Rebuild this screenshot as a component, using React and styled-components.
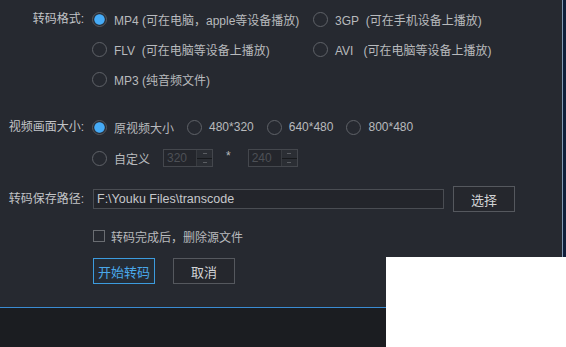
import React from "react";
import styled, { createGlobalStyle } from "styled-components";

const Global = createGlobalStyle`
  html, body { margin: 0; padding: 0; background: #262930; }
  body { width: 566px; height: 347px; overflow: hidden; }
  * { box-sizing: border-box; }
`;

const Frame = styled.div`
  position: relative;
  width: 566px;
  height: 347px;
  display: flex;
  background: #0f1f3a;
  font-family: "Liberation Sans", "Noto Sans CJK SC", sans-serif;
  font-size: 12px;
  color: #b8babd;
  overflow: hidden;
`;

const Window = styled.div`
  width: 563px;
  height: 100%;
  display: flex;
  flex-direction: column;
  border-right: 1px solid #8399b3;
`;

const Main = styled.div`
  flex: 0 0 308px;
  background: #262930;
  border-bottom: 1px solid #3a8bd2;
  padding-top: 4px;
  display: flex;
  flex-direction: column;
`;

const Footer = styled.div`
  flex: 1;
  background: #1b1d21;
`;

const Row = styled.div`
  display: grid;
  grid-template-columns: 84px 1fr;
  column-gap: 8px;
  align-items: start;
  margin-top: ${(p) => p.$mt || 0}px;
`;

const Label = styled.div`
  text-align: right;
  color: #c2c4c7;
  line-height: ${(p) => p.$lh || 30}px;
  white-space: nowrap;
`;

const FormatGrid = styled.div`
  display: grid;
  grid-template-columns: 221px auto;
  grid-auto-rows: 30px;
`;

const Line = styled.div`
  display: flex;
  align-items: center;
  gap: ${(p) => p.$gap || 13}px;
  height: ${(p) => p.$h || 30}px;
  margin-left: ${(p) => p.$ml || 0}px;
`;

const Option = styled.label`
  display: flex;
  align-items: center;
  gap: 7px;
  white-space: nowrap;
  color: #b8babd;
`;

const Radio = styled.span`
  width: 15px;
  height: 15px;
  border-radius: 50%;
  flex: none;
  border: 1.5px solid ${(p) => (p.$on ? "#55595f" : "#5f6268")};
  background: ${(p) =>
    p.$on
      ? "radial-gradient(circle, #46abf6 0 4.8px, #2b4a66 5.4px, #262930 6px)"
      : "transparent"};
`;

const Spin = styled.div`
  display: flex;
  width: 50px;
  height: 18px;
  border: 1px solid #44474d;
  background: #24262c;
`;

const SpinValue = styled.div`
  flex: 1;
  color: #4d5056;
  padding-left: 3px;
  line-height: 16px;
`;

const SpinButtons = styled.div`
  width: 16px;
  display: flex;
  flex-direction: column;
  border-left: 1px solid #393c41;
`;

const SpinBtn = styled.div`
  flex: 1;
  display: flex;
  align-items: center;
  justify-content: center;
  background: #2b2e34;
  border-bottom: ${(p) => (p.$top ? "1px solid #17191c" : "none")};
  &::after {
    content: "";
    width: 4px;
    height: 1px;
    background: #5b5e63;
  }
`;

const Star = styled.span`
  color: #b8babd;
  margin: -4px 4px 0 0;
`;

const PathInput = styled.div`
  width: 351px;
  height: 20px;
  margin-left: 1px;
  border: 1px solid #4a4d53;
  background: #23252b;
  color: #c6c8cb;
  line-height: 18px;
  padding-left: 3px;
  white-space: nowrap;
  font-size: 12.5px;
`;

const Button = styled.div`
  width: ${(p) => p.$w || 62}px;
  height: ${(p) => p.$h || 26}px;
  display: flex;
  align-items: center;
  justify-content: center;
  border: 1px solid ${(p) => (p.$primary ? "#3c9bde" : "#55585e")};
  background: ${(p) => (p.$primary ? "#252c35" : "#25272d")};
  color: ${(p) => (p.$primary ? "#4aa8ea" : "#d2d4d6")};
  font-size: 13px;
`;

const Check = styled.span`
  width: 12px;
  height: 12px;
  border: 1px solid #6a6d72;
  flex: none;
`;

const CheckOption = styled.label`
  display: flex;
  align-items: center;
  gap: 6px;
  margin-left: 1px;
  color: #b8babd;
`;

const Overlay = styled.div`
  position: absolute;
  left: 386px;
  top: 257px;
  right: 0;
  bottom: 0;
  background: #ffffff;
`;

const R = ({ on, children }) => (
  <Option>
    <Radio $on={on} />
    {children}
  </Option>
);

const Spinner = ({ value }) => (
  <Spin>
    <SpinValue>{value}</SpinValue>
    <SpinButtons>
      <SpinBtn $top />
      <SpinBtn />
    </SpinButtons>
  </Spin>
);

export default function App() {
  return (
    <>
      <Global />
      <Frame>
        <Window>
          <Main>
            <Row>
              <Label>转码格式:</Label>
              <FormatGrid>
                <R on>MP4 (可在电脑，apple等设备播放)</R>
                <R>3GP&nbsp; (可在手机设备上播放)</R>
                <R>FLV&nbsp;&nbsp;(可在电脑等设备上播放)</R>
                <R>AVI&nbsp;&nbsp;&nbsp;(可在电脑等设备上播放)</R>
                <R>MP3 (纯音频文件)</R>
              </FormatGrid>
            </Row>
            <Row $mt={18}>
              <Label>视频画面大小:</Label>
              <div>
                <Line>
                  <R on>原视频大小</R>
                  <R>480*320</R>
                  <R>640*480</R>
                  <R>800*480</R>
                </Line>
                <Line $h={32}>
                  <R>自定义</R>
                  <Spinner value="320" />
                  <Star>*</Star>
                  <Spinner value="240" />
                </Line>
              </div>
            </Row>
            <Row $mt={10}>
              <Label>转码保存路径:</Label>
              <Line $h={30} $gap={9}>
                <PathInput>F:\Youku Files\transcode</PathInput>
                <Button $w={62} $h={26}>选择</Button>
              </Line>
            </Row>
            <Row $mt={8}>
              <span />
              <Line $h={28}>
                <CheckOption>
                  <Check />
                  转码完成后，删除源文件
                </CheckOption>
              </Line>
            </Row>
            <Row $mt={8}>
              <span />
              <Line $h={26} $gap={18} $ml={1}>
                <Button $primary>开始转码</Button>
                <Button>取消</Button>
              </Line>
            </Row>
          </Main>
          <Footer />
        </Window>
        <Overlay />
      </Frame>
    </>
  );
}
